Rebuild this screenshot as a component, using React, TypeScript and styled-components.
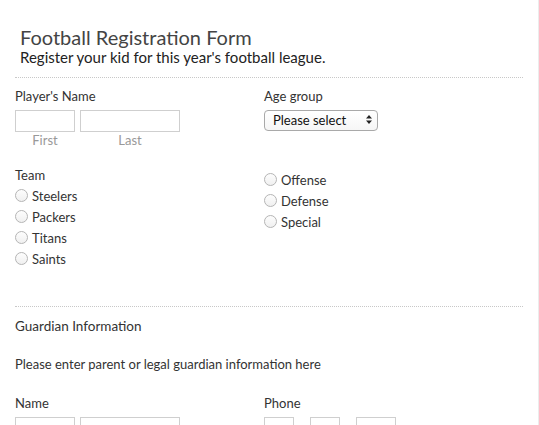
import React from 'react';
import styled, { createGlobalStyle } from 'styled-components';

const GlobalStyle = createGlobalStyle`
  html, body {
    margin: 0;
    padding: 0;
    background: #fff;
  }
  body {
    font-family: Lato, "Open Sans", "Liberation Sans", sans-serif;
    color: #333;
    overflow: hidden;
  }
`;

const Page = styled.div`
  width: 538px;
  height: 425px;
  border-right: 1px solid #ececec;
  overflow: hidden;
`;

const Form = styled.form`
  padding: 0 15px 0 15px;
  width: 508px;
`;

const Header = styled.div`
  padding: 26px 5px 11px;
  border-bottom: 1px dotted #c8c8c8;
`;

const Title = styled.h1`
  margin: 0;
  font-size: 20px;
  line-height: 22px;
  font-weight: 400;
  color: #444;
`;

const Subtitle = styled.div`
  font-size: 15px;
  line-height: 18px;
  color: #222;
`;

const Section = styled.div<{ $top: number; $bottom: number; $rule?: boolean }>`
  display: grid;
  grid-template-columns: 249px 1fr;
  padding: ${(p) => p.$top}px 0 ${(p) => p.$bottom}px;
  border-bottom: ${(p) => (p.$rule ? '1px dotted #c8c8c8' : 'none')};
`;

const Field = styled.div<{ $top?: number }>`
  display: flex;
  flex-direction: column;
  margin-top: ${(p) => p.$top ?? 0}px;
`;

const Label = styled.div<{ $gap?: number }>`
  font-size: 13px;
  line-height: 16px;
  color: #333;
  margin-bottom: ${(p) => p.$gap ?? 5}px;
`;

const Inputs = styled.div<{ $gap: number }>`
  display: flex;
  gap: ${(p) => p.$gap}px;
`;

const Part = styled.div`
  display: flex;
  flex-direction: column;
  align-items: center;
`;

const TextBox = styled.input<{ $w: number }>`
  box-sizing: border-box;
  width: ${(p) => p.$w}px;
  height: 22px;
  margin: 0;
  padding: 2px 4px;
  border: 1px solid #cfcfcf;
  border-radius: 0;
  outline: none;
  font: inherit;
`;

const Sub = styled.span`
  font-size: 13px;
  line-height: 16px;
  color: #999;
`;

const SelectWrap = styled.div`
  position: relative;
  width: 114px;
`;

const Select = styled.select`
  appearance: none;
  box-sizing: border-box;
  width: 114px;
  height: 21px;
  margin: 0;
  padding: 0 0 1px 8px;
  border: 1px solid #a9a9a9;
  border-radius: 4px;
  background: linear-gradient(#ffffff, #f6f6f6);
  font-family: inherit;
  font-size: 13px;
  color: #111;
  outline: none;
`;

const Arrows = styled.svg`
  position: absolute;
  right: 6px;
  top: 6px;
  pointer-events: none;
`;

const RadioList = styled.div`
  display: flex;
  flex-direction: column;
`;

const RadioRow = styled.label`
  display: flex;
  align-items: center;
  height: 21px;
  font-size: 13px;
  color: #333;
`;

const Circle = styled.span`
  box-sizing: border-box;
  width: 13px;
  height: 13px;
  border-radius: 50%;
  border: 1px solid #b5b5b5;
  background: linear-gradient(#fdfdfd, #f0f0f0);
  margin-right: 4px;
  flex-shrink: 0;
`;

const Heading = styled.div`
  font-size: 13.5px;
  line-height: 16px;
  color: #333;
`;

const Note = styled.div`
  font-size: 13px;
  line-height: 16px;
  color: #333;
  margin-top: 22px;
`;

const Block = styled.div`
  padding: 11px 0 0;
`;

const Radio = ({ label }: { label: string }) => (
  <RadioRow>
    <Circle />
    {label}
  </RadioRow>
);

export default function App() {
  return (
    <Page>
      <GlobalStyle />
      <Form>
        <Header>
          <Title>Football Registration Form</Title>
          <Subtitle>Register your kid for this year's football league.</Subtitle>
        </Header>

        <Section $top={10} $bottom={37} $rule>
          <Field>
            <Label $gap={6}>Player's Name</Label>
            <Inputs $gap={5}>
              <Part>
                <TextBox $w={60} />
                <Sub>First</Sub>
              </Part>
              <Part>
                <TextBox $w={100} />
                <Sub>Last</Sub>
              </Part>
            </Inputs>
          </Field>
          <Field>
            <Label $gap={5}>Age group</Label>
            <SelectWrap>
              <Select defaultValue="">
                <option value="">Please select</option>
              </Select>
              <Arrows width="6" height="9" viewBox="0 0 6 9">
                <path d="M3 0 L6 3.6 H0 Z M3 9 L6 5.4 H0 Z" fill="#222" />
              </Arrows>
            </SelectWrap>
          </Field>

          <Field $top={19}>
            <Label $gap={2}>Team</Label>
            <RadioList>
              <Radio label="Steelers" />
              <Radio label="Packers" />
              <Radio label="Titans" />
              <Radio label="Saints" />
            </RadioList>
          </Field>
          <Field $top={21}>
            <RadioList>
              <Radio label="Offense" />
              <Radio label="Defense" />
              <Radio label="Special" />
            </RadioList>
          </Field>
        </Section>

        <Block>
          <Heading>Guardian Information</Heading>
          <Note>Please enter parent or legal guardian information here</Note>
        </Block>

        <Section $top={23} $bottom={0}>
          <Field>
            <Label $gap={6}>Name</Label>
            <Inputs $gap={5}>
              <TextBox $w={60} />
              <TextBox $w={100} />
            </Inputs>
          </Field>
          <Field>
            <Label $gap={6}>Phone</Label>
            <Inputs $gap={16}>
              <TextBox $w={30} />
              <TextBox $w={30} />
              <TextBox $w={40} />
            </Inputs>
          </Field>
        </Section>
      </Form>
    </Page>
  );
}
